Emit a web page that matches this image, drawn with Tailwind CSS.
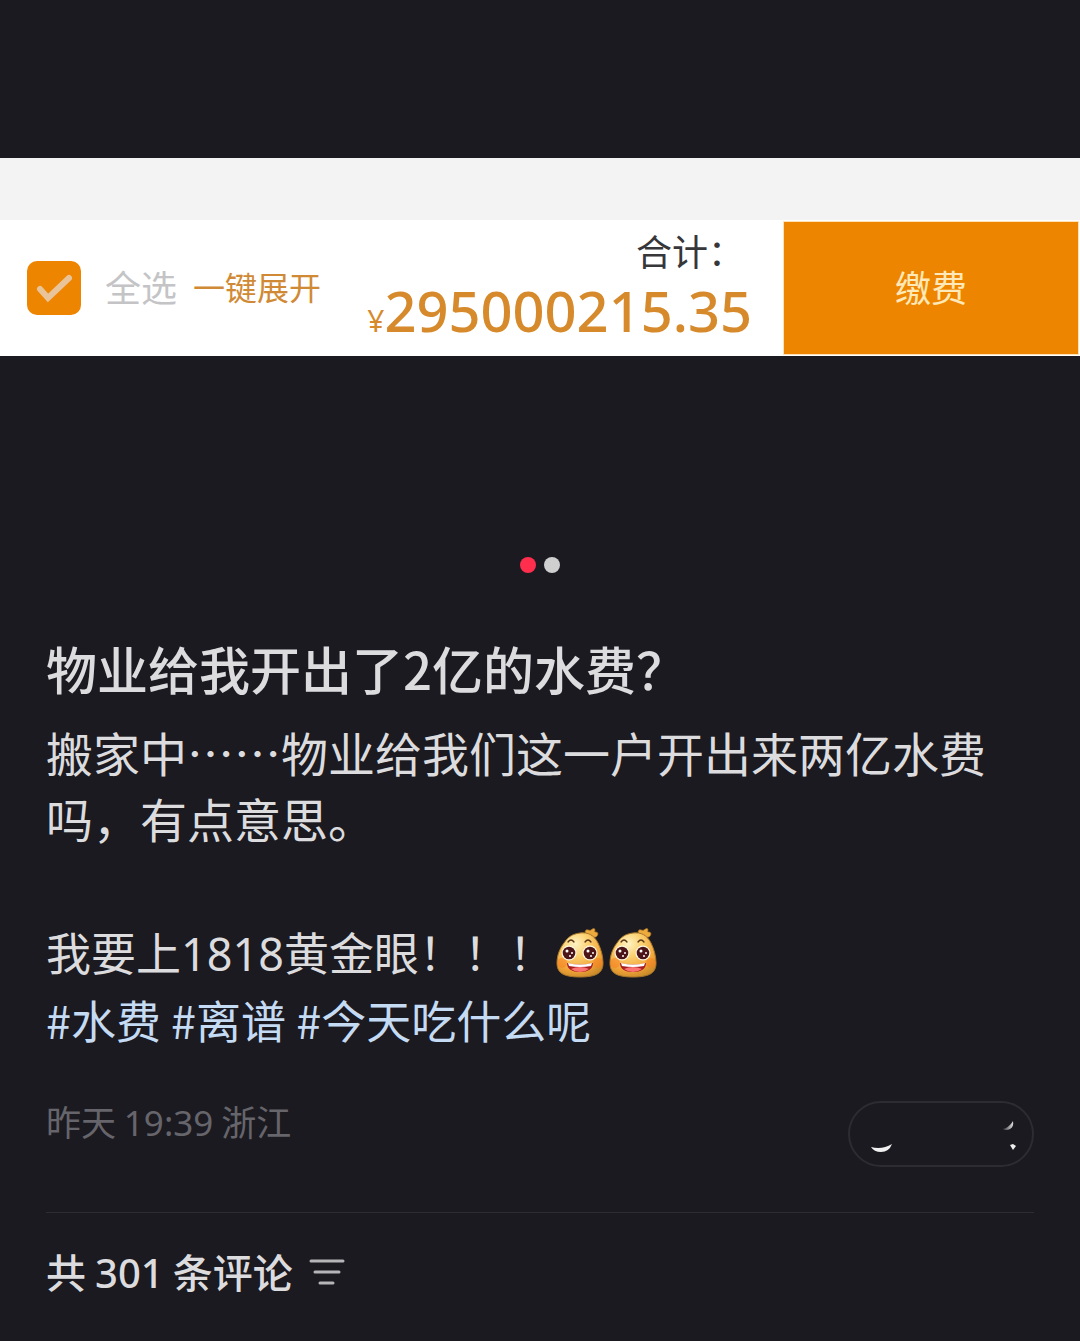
<!DOCTYPE html>
<html lang="zh-CN">

<head>
    <meta charset="UTF-8">
    <meta name="viewport" content="width=device-width, initial-scale=1.0">
    <title>物业给我开出了2亿的水费？</title>
    <script src="https://cdn.jsdelivr.net/npm/@tailwindcss/browser@4"></script>
</head>

<body class="min-h-screen bg-[#1b1a20] text-[#dcdcdf] font-['Noto_Sans_CJK_SC',sans-serif]">

    <!-- photo carousel -->
    <section class="pt-[158px]">
        <div class="bg-white">
            <div class="h-[62px] bg-[#f3f3f3]"></div>
            <div class="flex items-stretch h-[136px]">
                <div class="flex items-center pl-[27px] pb-1">
                    <label class="flex items-center gap-6 text-4xl text-[#c4c4c6]">
                        <span class="grid pt-1">
                            <input type="checkbox" checked class="appearance-none col-start-1 row-start-1 size-[54px] rounded-[10px] bg-[#ee8500]">
                            <svg class="col-start-1 row-start-1 size-[54px] pointer-events-none" viewBox="0 0 54 54" fill="none" stroke="#e9c49a" stroke-width="6" stroke-linecap="round" stroke-linejoin="round">
                                <path d="M13 28l8 9 21-20" stroke-linejoin="miter" />
                            </svg>
                        </span>
                        全选
                    </label>
                    <button class="ml-4 text-[32px] text-[#d08a35]">一键展开</button>
                </div>
                <div class="flex-1 flex flex-col items-end pr-8">
                    <p class="pt-[6px] pr-2 text-4xl leading-12 text-[#37373a]">合计：</p>
                    <p class="text-[56px] leading-[72px] font-medium text-[#d68a2b] font-['Noto_Sans',sans-serif] whitespace-nowrap"><span class="text-3xl font-normal">¥</span>295000215.35</p>
                </div>
                <button class="w-[294px] mt-[2px] mb-[2px] mr-[2px] pb-1 bg-[#ee8500] text-4xl text-[#ffe9b8] outline-1 outline-[#ffe3b5]">缴费</button>
            </div>
        </div>
        <div class="flex justify-center gap-2 pt-[201px]">
            <span class="size-4 rounded-full bg-[#ff2e4d]"></span>
            <span class="size-4 rounded-full bg-[#cfcfcf]"></span>
        </div>
    </section>

    <!-- note text -->
    <article class="px-[46px] pt-[62px]">
        <h1 class="text-[51px] leading-[66px] font-medium">物业给我开出了2亿的水费？</h1>
        <p class="pt-[18px] pr-4 text-[47px] leading-[66px]">搬家中……物业给我们这一户开出来两亿水费吗，有点意思。</p>
        <div class="pt-[68px] text-[45px] leading-[66px]">
            <p class="flex items-center">
                <span>我要上<span class="font-['Noto_Sans',sans-serif]">1818</span>黄金眼！！！</span>
                <svg class="size-[53px]" viewBox="0 0 53 53" role="img" aria-label="哇">
                    <defs>
                        <radialGradient id="skin" cx=".4" cy=".25" r=".8">
                            <stop offset="0" stop-color="#fff3c4" />
                            <stop offset=".35" stop-color="#fbd273" />
                            <stop offset=".75" stop-color="#f2a437" />
                            <stop offset="1" stop-color="#c98a2a" />
                        </radialGradient>
                        <symbol id="face" viewBox="0 0 53 53">
                            <path d="M33 9c-1-3-3-4-1-6 2-1 3 1 5 0 2-2 4-2 4 0 0 1-1 2 1 2 3 0 2 4 0 5-2 0-4 1-5 4z" fill="#edab3d" stroke="#9c681f" stroke-width=".7" />
                            <path d="M26 6c8-1 14 2 18 10 3 6 5 13 5 20 0 9-5 14-23 14S3 45 3 36c0-8 3-15 7-20C14 10 18 7 26 6z" fill="url(#skin)" stroke="#a8752a" stroke-width="1" />
                            <ellipse cx="8" cy="36" rx="5" ry="5" fill="#f57d20" opacity=".5" />
                            <ellipse cx="44" cy="36" rx="5" ry="5" fill="#f57d20" opacity=".5" />
                            <path d="M14 15q3-4 6 0M31 15q3-4 6 0" fill="none" stroke="#5b3518" stroke-width="1.3" stroke-linecap="round" />
                            <circle cx="15" cy="26" r="7.5" fill="#fff8e3" />
                            <circle cx="36" cy="26" r="7.5" fill="#fff8e3" />
                            <circle cx="15" cy="26" r="6.3" fill="#4c1518" />
                            <circle cx="36" cy="26" r="6.3" fill="#4c1518" />
                            <g fill="#fff">
                                <circle cx="13" cy="24" r="1.5" />
                                <circle cx="18" cy="26" r="1" />
                                <circle cx="16" cy="29" r="1" />
                                <circle cx="34" cy="24" r="1.5" />
                                <circle cx="39" cy="26" r="1" />
                                <circle cx="37" cy="29" r="1" />
                            </g>
                            <path d="M13 36q13 3 26 0c0 6-5 9-13 9s-13-3-13-9z" fill="#a81e20" />
                            <path d="M14 36q12 3 24 0l-1 3q-11 2-22 0z" fill="#fff" />
                            <path d="M17 42q9-4 18 0-4 3-9 3t-9-3z" fill="#fb7472" />
                        </symbol>
                    </defs>
                    <use href="#face" />
                </svg>
                <svg class="size-[53px]" viewBox="0 0 53 53" role="img" aria-label="哇">
                    <use href="#face" />
                </svg>
            </p>
            <p class="text-[#c5daf3]"><a href="#">#水费</a> <a href="#">#离谱</a> <a href="#">#今天吃什么呢</a></p>
        </div>

        <div class="flex items-start justify-between pt-12 pb-[45px] border-b border-[#2d2c32]">
            <p class="text-[35px] leading-10 text-[#66656b]">昨天 <span class="font-['Noto_Sans',sans-serif]">19:39</span> 浙江</p>
            <button class="w-[186px] h-[66px] rounded-full border-2 border-[#2d2c32]" aria-label="不喜欢">
                <svg class="w-full h-full" viewBox="0 0 182 62">
                    <defs>
                        <linearGradient id="fade">
                            <stop offset="0" stop-color="#fff" stop-opacity="0" />
                            <stop offset="1" stop-color="#ddd" />
                        </linearGradient>
                    </defs>
                    <path d="M21 44q11 3 21-3-3 8-11 8-7 0-10-5z" fill="#f0f0f1" />
                    <path d="M152 26q7-1 11-8 1 6-3 8-4 2-8 0z" fill="url(#fade)" />
                    <path d="M160 42l3-1 3 2-3 4z" fill="#eee" />
                </svg>
            </button>
        </div>
    </article>

    <!-- comments header -->
    <section class="flex items-center gap-4 px-[46px] pt-7 pb-6">
        <h2 class="text-[40px] leading-[60px] font-medium">共 <span class="font-['Noto_Sans',sans-serif]">301</span> 条评论</h2>
        <button aria-label="排序">
            <svg class="w-9 h-7" viewBox="0 0 36 28" fill="none" stroke="#b5b5b8" stroke-width="3" stroke-linecap="round">
                <path d="M2 3h32M6 14h24M11 25h13" />
            </svg>
        </button>
    </section>

</body>

</html>
